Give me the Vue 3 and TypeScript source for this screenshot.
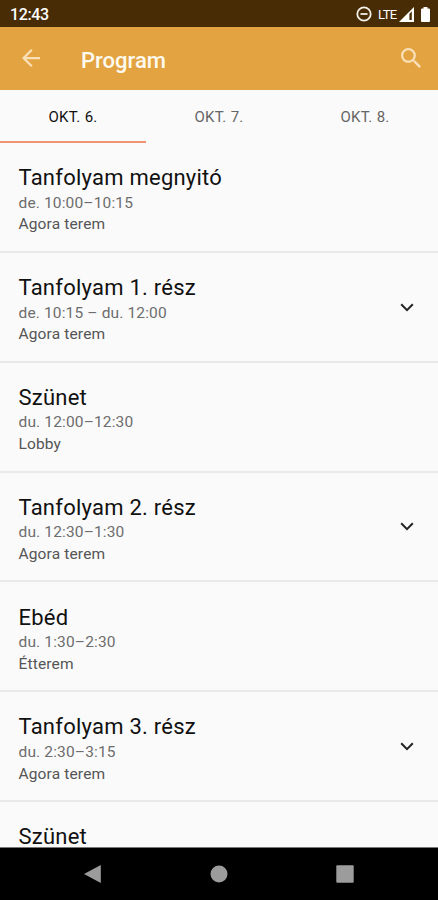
<script setup lang="ts">
interface Session {
  title: string
  time?: string
  place?: string
  expandable?: boolean
}

const tabs: string[] = ['OKT. 6.', 'OKT. 7.', 'OKT. 8.']
const activeTab = 0

const sessions: Session[] = [
  { title: 'Tanfolyam megnyitó', time: 'de. 10:00–10:15', place: 'Agora terem' },
  { title: 'Tanfolyam 1. rész', time: 'de. 10:15 – du. 12:00', place: 'Agora terem', expandable: true },
  { title: 'Szünet', time: 'du. 12:00–12:30', place: 'Lobby' },
  { title: 'Tanfolyam 2. rész', time: 'du. 12:30–1:30', place: 'Agora terem', expandable: true },
  { title: 'Ebéd', time: 'du. 1:30–2:30', place: 'Étterem' },
  { title: 'Tanfolyam 3. rész', time: 'du. 2:30–3:15', place: 'Agora terem', expandable: true },
  { title: 'Szünet' },
]
</script>

<template>
  <div class="screen">
    <div class="status">
      <span class="clock">12:43</span>
      <svg class="dnd" viewBox="0 0 16 16">
        <circle cx="8" cy="8" r="6.7" />
        <path d="M4.5 8h7" />
      </svg>
      <span class="lte">LTE</span>
      <svg class="signal" viewBox="0 0 15 15">
        <path d="M0 15 15 0v15z" fill="#fff" />
        <path d="M10.400 6.800 12.800 4.400V13h-2.400z" fill="#482c05" />
      </svg>
      <svg class="battery" viewBox="0 0 9 15">
        <path d="M2.500 0h4v1.500H8a1 1 0 0 1 1 1V14a1 1 0 0 1-1 1H1a1 1 0 0 1-1-1V2.500a1 1 0 0 1 1-1h1.500z" fill="#fff" />
      </svg>
    </div>

    <header class="appbar">
      <svg class="back" viewBox="4 4 16 16">
        <path d="M20 11H7.830l5.590-5.590L12 4l-8 8 8 8 1.410-1.410L7.830 13H20z" />
      </svg>
      <h1>Program</h1>
      <svg class="search" viewBox="3 3 17.490 17.490">
        <path d="M15.500 14h-.79l-.28-.27A6.471 6.471 0 0 0 16 9.500 6.500 6.500 0 1 0 9.500 16c1.610 0 3.090-.59 4.230-1.570l.27.28v.79l5 4.990L20.490 19zm-6 0C7.010 14 5 11.990 5 9.500S7.010 5 9.500 5 14 7.010 14 9.500 11.990 14 9.500 14z" />
      </svg>
    </header>

    <nav class="tabs">
      <div v-for="(tab, i) in tabs" :key="tab" class="tab" :class="{ active: i === activeTab }">{{ tab }}</div>
    </nav>

    <main class="list">
      <article v-for="(s, i) in sessions" :key="i" class="row">
        <div class="info">
          <h2>{{ s.title }}</h2>
          <p v-if="s.time">{{ s.time }}</p>
          <p v-if="s.place" class="place">{{ s.place }}</p>
        </div>
        <svg v-if="s.expandable" class="chevron" viewBox="0 0 14 9">
          <path d="M1.200 1.300 7 7.100l5.800-5.800" />
        </svg>
      </article>
    </main>

    <footer class="navbar">
      <div class="key"><svg viewBox="0 0 18 18"><path d="M16.800 0v18L0 9z" /></svg></div>
      <div class="key"><svg viewBox="0 0 18 18"><circle cx="9" cy="9" r="8.500" /></svg></div>
      <div class="key"><svg viewBox="0 0 18 18"><rect x=".3" y=".3" width="17.400" height="17.400" rx="1" /></svg></div>
    </footer>
  </div>
</template>

<style>
body {
  margin: 0;
  overflow: hidden;
}
</style>

<style scoped>
.screen {
  display: flex;
  flex-direction: column;
  width: 438px;
  height: 900px;
  overflow: hidden;
  background: #fafafa;
  font-family: Roboto, sans-serif;
}
h1, h2, p {
  margin: 0;
}
.status {
  flex: none;
  display: flex;
  align-items: center;
  box-sizing: border-box;
  height: 27px;
  padding: 1px 8px 0 10px;
  background: #482c05;
  color: #fff;
}
.clock {
  flex: 1;
  font-size: 16px;
  font-weight: 500;
  letter-spacing: -0.4px;
}
.dnd {
  width: 16px;
  height: 16px;
  margin-right: 6px;
  fill: none;
  stroke: #f3efe9;
  stroke-width: 1.800;
}
.lte {
  width: 21px;
  font-size: 13px;
  font-weight: 400;
  letter-spacing: -0.6px;
}
.signal {
  width: 15px;
  height: 15px;
}
.battery {
  width: 9px;
  height: 15px;
  margin-left: 7px;
}
.appbar {
  flex: none;
  display: flex;
  align-items: center;
  box-sizing: border-box;
  height: 63px;
  padding: 0 17px 0 22px;
  background: #e2a340;
}
.back {
  width: 18px;
  height: 18px;
  margin: 0 41px 2px 0;
  fill: #fae0b8;
}
h1 {
  flex: 1;
  padding-top: 3px;
  color: #fffaf0;
  font-size: 22px;
  font-weight: 500;
}
.search {
  width: 20px;
  height: 20px;
  margin-bottom: 1px;
  fill: #fae0b8;
}
.tabs {
  flex: none;
  display: flex;
  height: 53px;
}
.tab {
  flex: 1;
  box-sizing: border-box;
  border-bottom: 2px solid transparent;
  color: #666;
  font-size: 15px;
  font-weight: 400;
  line-height: 55px;
  text-align: center;
  letter-spacing: 0.3px;
}
.tab.active {
  border-bottom-color: #f09473;
  color: #111;
}
.list {
  flex: 1;
  min-height: 0;
  overflow: hidden;
}
.row {
  display: flex;
  align-items: center;
  box-sizing: border-box;
  height: 109.850px;
  padding: 0 24px 0 18.500px;
  border-bottom: 2px solid #e9e9e9;
}
.info {
  flex: 1;
  align-self: flex-start;
  padding-top: 21.200px;
}
h2 {
  margin-bottom: 0.900px;
  color: #111;
  font-size: 22px;
  font-weight: 400;
  line-height: 27.600px;
  letter-spacing: 0.24px;
}
p {
  color: #6d6d6d;
  font-size: 15.500px;
  line-height: 21.700px;
  letter-spacing: 0.15px;
}
.place {
  color: #555;
}
.chevron {
  width: 14px;
  height: 9px;
  margin-top: 0.500px;
  fill: none;
  stroke: #222;
  stroke-width: 2;
}
.navbar {
  flex: none;
  display: flex;
  align-items: center;
  justify-content: center;
  gap: 108px;
  box-sizing: border-box;
  height: 53px;
  border-top: 1px solid #777;
  background: #000;
}
.key svg {
  display: block;
  width: 18px;
  height: 18px;
  fill: #9c9c9c;
}
</style>
